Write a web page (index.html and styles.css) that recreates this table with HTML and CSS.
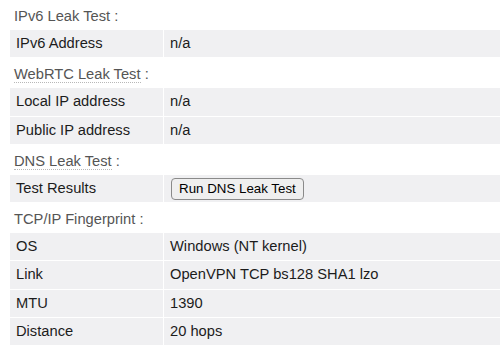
FILE: index.html
```html
<!DOCTYPE html>
<html>
<head>
<meta charset="utf-8">
<link rel="stylesheet" href="styles.css">
</head>
<body>
<div class="page">
  <div class="heading heading-first">IPv6 Leak Test :</div>
  <div class="group">
    <div class="row"><div class="label">IPv6 Address</div><div class="value">n/a</div></div>
  </div>

  <div class="heading"><span class="dotted">WebRTC Leak Test</span> :</div>
  <div class="group">
    <div class="row"><div class="label">Local IP address</div><div class="value">n/a</div></div>
    <div class="row"><div class="label">Public IP address</div><div class="value">n/a</div></div>
  </div>

  <div class="heading"><span class="dotted">DNS Leak Test</span> :</div>
  <div class="group">
    <div class="row"><div class="label">Test Results</div><div class="value value-btn"><button class="btn" type="button">Run DNS Leak Test</button></div></div>
  </div>

  <div class="heading">TCP/IP Fingerprint :</div>
  <div class="group">
    <div class="row"><div class="label">OS</div><div class="value">Windows (NT kernel)</div></div>
    <div class="row"><div class="label">Link</div><div class="value">OpenVPN TCP bs128 SHA1 lzo</div></div>
    <div class="row"><div class="label">MTU</div><div class="value">1390</div></div>
    <div class="row"><div class="label">Distance</div><div class="value">20 hops</div></div>
  </div>
</div>
</body>
</html>
```

FILE: styles.css
```css
html, body {
  margin: 0;
  padding: 0;
  background: #ffffff;
}

.page {
  padding-left: 10px;
  font-family: "Liberation Sans", Arial, sans-serif;
  font-size: 14.7px;
  color: #1c1c1c;
}

.heading {
  padding: 9px 4px 6px;
  line-height: 16px;
  color: #555555;
}

.heading-first {
  padding-top: 8px;
}

.dotted {
  border-bottom: 1px dotted #b8b8b8;
}

.group {
  display: flex;
  flex-direction: column;
  gap: 1px;
}

.row {
  display: grid;
  grid-template-columns: 153px 1fr;
  column-gap: 1px;
}

.label,
.value {
  background: #f0f0f2;
  padding: 5px 5px 5px 6px;
  line-height: 17.3px;
  white-space: nowrap;
}

.value-btn {
  padding-top: 2px;
  padding-bottom: 2px;
  display: flex;
  align-items: center;
}

.btn {
  margin: 0 0 0 1px;
  font-family: "Liberation Sans", Arial, sans-serif;
  font-size: 13.33px;
  line-height: 16px;
  color: #000000;
  background: #efefef;
  border: 1px solid #8a8a8a;
  border-radius: 4px;
  padding: 2px 7px;
}
```
